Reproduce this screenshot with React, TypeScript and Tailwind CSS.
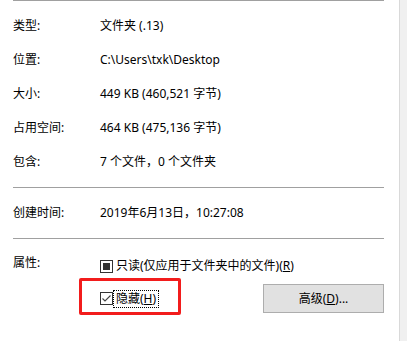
import React from 'react';

const font = { fontFamily: '"Noto Sans", "Noto Sans CJK SC", sans-serif' };

const Row: React.FC<{ label: string; value: React.ReactNode }> = ({ label, value }) => (
  <div className="flex h-[34px] items-center">
    <div className="w-[87px] shrink-0">{label}</div>
    <div>{value}</div>
  </div>
);

const Sep = () => <div className="mr-[15px] h-px bg-[#a0a0a0]" />;

export default function App() {
  return (
    <div
      className="relative flex h-[341px] w-[407px] overflow-hidden bg-white text-[12px] leading-[16px] text-black"
      style={font}
    >
      <div className="flex w-[399px] flex-col pl-[13px]">
        <Sep />
        <div className="mt-[8px]">
          <Row label="类型:" value="文件夹 (.13)" />
          <Row label="位置:" value="C:\Users\txk\Desktop" />
          <Row label="大小:" value="449 KB (460,521 字节)" />
          <Row label="占用空间:" value="464 KB (475,136 字节)" />
          <Row label="包含:" value="7 个文件，0 个文件夹" />
        </div>
        <div className="mt-[8px]">
          <Sep />
        </div>
        <div className="flex h-[50px] items-center">
          <div className="w-[87px] shrink-0">创建时间:</div>
          <div>2019年6月13日，10:27:08</div>
        </div>
        <Sep />

        {/* Attributes */}
        <div className="mt-[16px] flex">
          <div className="w-[87px] shrink-0">属性:</div>
          <div className="flex flex-1 flex-col pr-[15px]">
            <div className="mt-[3px] flex items-center">
              <div className="flex h-[13px] w-[13px] items-center justify-center border border-[#333]">
                <div className="h-[7px] w-[7px] bg-[#333]" />
              </div>
              <span className="ml-[3px]">
                只读(仅应用于文件夹中的文件)(<span className="underline">R</span>)
              </span>
            </div>
            <div className="mt-[10px] flex items-center">
              <div className="flex h-[13px] w-[13px] items-center justify-center border border-[#333]">
                <svg width="11" height="11" viewBox="0 0 11 11">
                  <path d="M1.5 5.5 L4 8 L9.5 2.5" fill="none" stroke="#444" strokeWidth="1.1" />
                </svg>
              </div>
              <span className="ml-px px-[2px] outline-1 outline-dotted outline-black">
                隐藏(<span className="underline">H</span>)
              </span>
              <button
                className="ml-auto h-[29px] w-[121px] border border-[#adadad] bg-[#e1e1e1] text-[12px]"
                style={font}
              >
                高级(<span className="underline">D</span>)...
              </button>
            </div>
          </div>
        </div>
      </div>
      <div className="w-[8px] border-l border-[#d9d9d9] bg-[#f0f0f0]" />

      {/* red highlight */}
      <div className="absolute left-[79px] top-[278px] h-[37px] w-[102px] rounded-[2px] border-[3px] border-[#f21c1c]" />
    </div>
  );
}
